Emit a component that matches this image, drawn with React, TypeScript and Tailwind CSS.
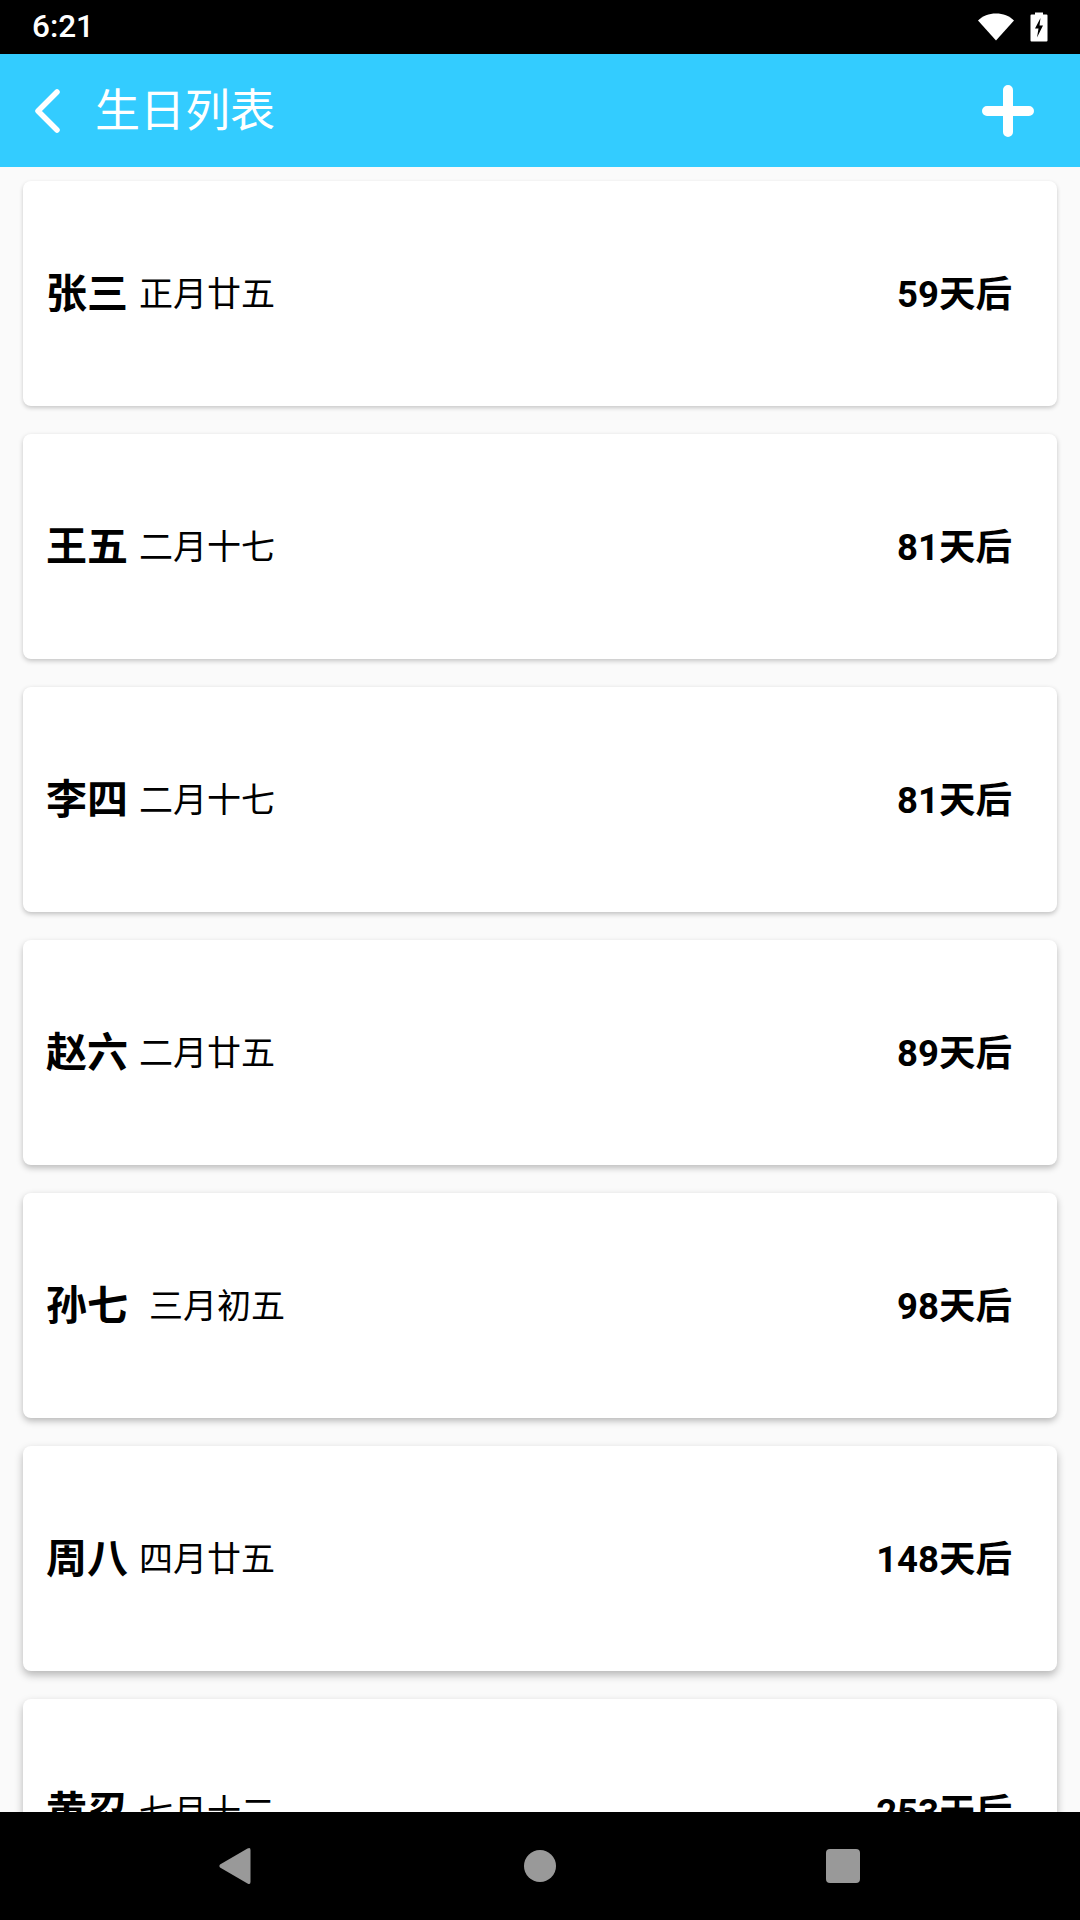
const rows = [
  { name: "张三", date: "正月廿五", days: "59天后", gap: "ml-[11px]", shadow: "shadow-[0_2px_4px_rgba(0,0,0,0.2)]" },
  { name: "王五", date: "二月十七", days: "81天后", gap: "ml-[11px]", shadow: "shadow-[0_2px_5px_rgba(0,0,0,0.22)]" },
  { name: "李四", date: "二月十七", days: "81天后", gap: "ml-[11px]", shadow: "shadow-[0_2px_5px_rgba(0,0,0,0.24)]" },
  { name: "赵六", date: "二月廿五", days: "89天后", gap: "ml-[11px]", shadow: "shadow-[0_3px_6px_rgba(0,0,0,0.25)]" },
  { name: "孙七", date: "三月初五", days: "98天后", gap: "ml-[21px]", shadow: "shadow-[0_3px_7px_rgba(0,0,0,0.27)]" },
  { name: "周八", date: "四月廿五", days: "148天后", gap: "ml-[11px]", shadow: "shadow-[0_4px_8px_rgba(0,0,0,0.28)]" },
  { name: "黄忍", date: "七月十二", days: "253天后", gap: "ml-[11px]", shadow: "shadow-[0_4px_8px_rgba(0,0,0,0.28)]" },
];

export default function App() {
  return (
    <div className="flex h-[1920px] w-[1080px] flex-col overflow-hidden bg-[#fafafa] font-['Roboto','Noto_Sans_CJK_SC',sans-serif] text-black">
      <div className="flex h-[54px] shrink-0 items-center justify-between bg-black pl-[32px] pr-[32px] text-white">
        <span className="text-[31.5px] font-medium leading-none">6:21</span>
        <div className="flex items-center gap-[16px]">
          <svg width="36" height="28" viewBox="0 0 36 28" className="block">
            <path d="M0 7.5C4.5 3 11 0.5 18 0.5S31.500 3 36 7.500L18 27.500Z" fill="#fff" />
          </svg>
          <svg width="18" height="30" viewBox="0 0 18 30" className="block">
            <path d="M5 0.500H13V2.500H16.500Q17.500 2.500 17.500 3.500V28.500Q17.500 29.500 16.500 29.500H1.500Q0.500 29.500 0.500 28.500V3.500Q0.500 2.500 1.500 2.500H5Z" fill="#fff" />
            <path d="M10.500 6L5 16.500H8.500L7 25.500L13 13.500H9.500Z" fill="#000" />
          </svg>
        </div>
      </div>
      <header className="flex h-[113px] shrink-0 items-center justify-between bg-[#33ccff] pl-[35px] pr-[46px] text-white">
        <div className="flex items-center">
          <svg width="26" height="44" viewBox="0 0 26 44" className="block" fill="none">
            <path d="M22 3L3 22L22 41" stroke="#fff" strokeWidth="5.500" strokeLinecap="round" strokeLinejoin="round" />
          </svg>
          <h1 className="ml-[34px] pt-[2px] text-[45px] font-normal leading-none">生日列表</h1>
        </div>
        <svg width="52" height="52" viewBox="0 0 52 52" className="block" fill="none">
          <path d="M26 5V47M5 26H47" stroke="#fff" strokeWidth="10" strokeLinecap="round" />
        </svg>
      </header>
      <main className="flex min-h-0 flex-1 flex-col gap-[28px] overflow-hidden px-[23px] pt-[14px]">
        {rows.map((r) => (
          <div
            key={r.name}
            className={`flex h-[225px] shrink-0 items-center justify-between rounded-[8px] bg-white pl-[23px] pr-[45px] ${r.shadow}`}
          >
            <div className="flex items-center">
              <span className="pt-[2px] text-[41px] font-bold leading-none">{r.name}</span>
              <span className={`${r.gap} text-[34px] leading-none`}>{r.date}</span>
            </div>
            <span className="pt-[4px] text-[36.5px] font-bold leading-none">{r.days}</span>
          </div>
        ))}
      </main>
      <nav className="flex h-[108px] shrink-0 items-center justify-center bg-black">
        <div className="flex items-center gap-[270px] pr-[2.5px]">
          <svg width="34" height="38" viewBox="0 0 34 38" className="block">
            <path d="M29.500 1.500Q32.500 0 32.500 3V35Q32.500 38 29.500 36.500L2 20.500Q0.500 19 2 17.500Z" fill="#999" />
          </svg>
          <div className="ml-[2.5px] h-[32px] w-[32px] rounded-full bg-[#999]" />
          <div className="h-[34px] w-[34px] rounded-[4px] bg-[#999]" />
        </div>
      </nav>
    </div>
  );
}
